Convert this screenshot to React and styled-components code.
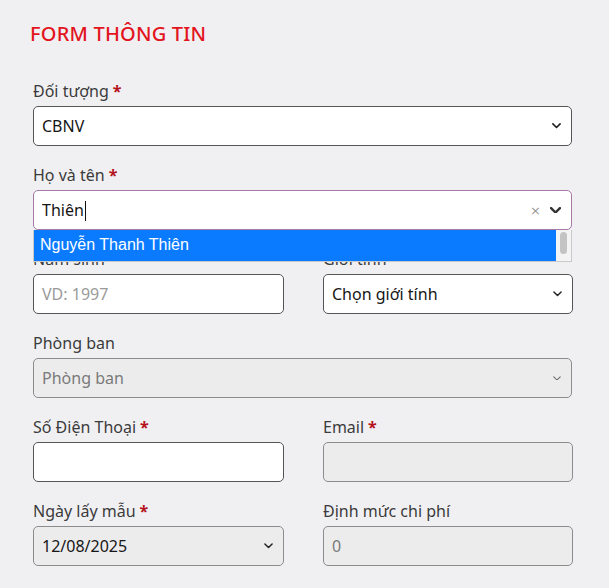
import React from "react";
import styled, { createGlobalStyle } from "styled-components";

const GlobalStyle = createGlobalStyle`
  html, body {
    margin: 0;
    padding: 0;
    background: #f0f0f3;
  }
  body {
    font-family: "Noto Sans", "Open Sans", sans-serif;
    color: #333;
  }
  * {
    box-sizing: border-box;
  }
`;

const Page = styled.div`
  width: 609px;
  min-height: 588px;
  padding: 20px 37px 0 33px;
  background: #f0f0f3;
`;

const Title = styled.h2`
  margin: 0 0 31px -3px;
  font-size: 20px;
  line-height: 28px;
  font-weight: 500;
  color: #e3141c;
  letter-spacing: 0.2px;
`;

const Row = styled.div`
  display: grid;
  grid-template-columns: 251px 250px;
  column-gap: 39px;
`;

const Field = styled.div`
  position: relative;
  margin-bottom: 17px;
`;

const Label = styled.label`
  display: block;
  margin-bottom: 3px;
  font-size: 16px;
  line-height: 24px;
  color: #3b3b3b;
`;

const Required = styled.span`
  color: #b5121b;
  font-weight: 700;
  margin-left: 4px;
`;

const Box = styled.div`
  display: flex;
  align-items: center;
  height: 40px;
  padding: 0 10px 0 8px;
  border: ${(p) => (p.$focus ? "1.5px" : "1px")} solid
    ${(p) => (p.$focus ? "#a57aa6" : p.$disabled ? "#8c8c8c" : "#555")};
  border-radius: 5px;
  background: ${(p) => (p.$disabled ? "#ececec" : "#fff")};
  font-size: 16px;
  color: ${(p) => (p.$muted ? "#7a7a7a" : "#161616")};
`;

const Value = styled.span`
  flex: 1;
  white-space: nowrap;
  overflow: hidden;
`;

const Placeholder = styled.span`
  flex: 1;
  color: #9a9a9a;
`;

const Caret = styled.span`
  display: inline-block;
  width: 1px;
  height: 20px;
  background: #111;
  vertical-align: middle;
  margin-left: 1px;
`;

const Clear = styled.span`
  font-family: "DejaVu Sans", sans-serif;
  font-size: 13px;
  color: #9a9a9a;
  margin-right: 9px;
`;

const Menu = styled.div`
  position: absolute;
  left: 0;
  right: 0;
  top: 100%;
  height: 32px;
  display: flex;
  border: 1px solid #c9c9c9;
  border-top: none;
  background: #fff;
  z-index: 2;
`;

const Option = styled.div`
  flex: 1;
  background: #0a7bff;
  color: #fff;
  font-family: "Liberation Sans", Arial, sans-serif;
  font-size: 16px;
  line-height: 30px;
  padding-left: 6px;
`;

const Scrollbar = styled.div`
  width: 15px;
  background: #f4f4f4;
  display: flex;
  justify-content: center;
  padding-top: 2px;
`;

const Thumb = styled.div`
  width: 7px;
  height: 22px;
  border-radius: 4px;
  background: #c4c4c4;
`;

const Chevron = ({ size = 10, color = "#222", weight = 2 }) => (
  <svg width={size} height={size * 0.6} viewBox="0 0 10 6" fill="none">
    <path
      d="M1 1l4 4 4-4"
      stroke={color}
      strokeWidth={weight}
      strokeLinecap="round"
      strokeLinejoin="round"
    />
  </svg>
);

const FieldLabel = ({ text, required }) => (
  <Label>
    {text}
    {required && <Required>*</Required>}
  </Label>
);

export default function App() {
  return (
    <Page>
      <GlobalStyle />
      <Title>FORM THÔNG TIN</Title>

      <Field>
        <FieldLabel text="Đối tượng" required />
        <Box>
          <Value>CBNV</Value>
          <Chevron size={9} weight={1.8} />
        </Box>
      </Field>

      <Field>
        <FieldLabel text="Họ và tên" required />
        <Box $focus>
          <Value>
            Thiên
            <Caret />
          </Value>
          <Clear>×</Clear>
          <Chevron size={11} weight={2.2} color="#333" />
        </Box>
        <Menu>
          <Option>Nguyễn Thanh Thiên</Option>
          <Scrollbar>
            <Thumb />
          </Scrollbar>
        </Menu>
      </Field>

      <Row>
        <Field>
          <FieldLabel text="Năm sinh" />
          <Box>
            <Placeholder>VD: 1997</Placeholder>
          </Box>
        </Field>
        <Field>
          <FieldLabel text="Giới tính" />
          <Box>
            <Value>Chọn giới tính</Value>
            <Chevron size={9} weight={1.6} />
          </Box>
        </Field>
      </Row>

      <Field>
        <FieldLabel text="Phòng ban" />
        <Box $disabled $muted>
          <Value>Phòng ban</Value>
          <Chevron size={8} weight={1.3} color="#666" />
        </Box>
      </Field>

      <Row>
        <Field>
          <FieldLabel text="Số Điện Thoại" required />
          <Box />
        </Field>
        <Field>
          <FieldLabel text="Email" required />
          <Box $disabled />
        </Field>
      </Row>

      <Row>
        <Field>
          <FieldLabel text="Ngày lấy mẫu" required />
          <Box $disabled>
            <Value>12/08/2025</Value>
            <Chevron size={9} weight={1.6} />
          </Box>
        </Field>
        <Field>
          <FieldLabel text="Định mức chi phí" />
          <Box $disabled $muted>
            <Value>0</Value>
          </Box>
        </Field>
      </Row>
    </Page>
  );
}
